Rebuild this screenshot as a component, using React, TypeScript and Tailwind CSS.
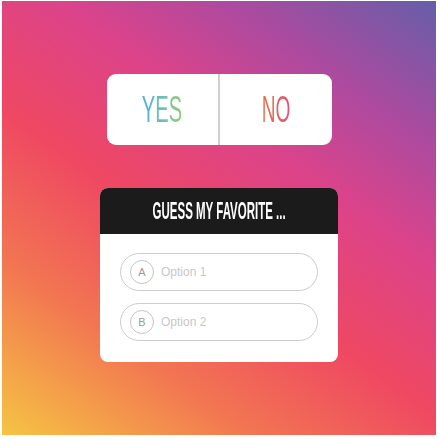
// App.tsx
const options = [
  { key: 'A', label: 'Option 1' },
  { key: 'B', label: 'Option 2' },
];

const App: React.FC = () => {
  return (
    <div className="w-[440px] h-[439px] bg-white pl-[2px] pt-[1px]">
      <div className="w-[434px] h-[434px] flex flex-col items-center pt-[73px] bg-[linear-gradient(35deg,#f6c443_0%,#f27552_24%,#ef4862_44%,#dc438a_64%,#ad4a9f_80%,#665ea9_100%)]">
        {/* poll sticker */}
        <div className="w-[225px] h-[71px] bg-white rounded-[9px] flex">
          <div className="flex-1 flex items-center justify-center border-r-[2px] border-[#cfcfcf]">
            <span
              className="inline-block scale-x-[0.56] text-[36px] leading-none bg-[linear-gradient(90deg,#4aaee0,#6fc0b4,#95cb72)] bg-clip-text text-transparent"
              style={{ fontFamily: '"Liberation Sans", Arial, sans-serif' }}
            >
              YES
            </span>
          </div>
          <div className="flex-1 flex items-center justify-center">
            <span
              className="inline-block scale-x-[0.53] text-[36px] leading-none bg-[linear-gradient(90deg,#ec7448,#d65779)] bg-clip-text text-transparent"
              style={{ fontFamily: '"Liberation Sans", Arial, sans-serif' }}
            >
              NO
            </span>
          </div>
        </div>

        {/* quiz sticker */}
        <div className="mt-[43px] w-[238px] h-[174px] bg-white rounded-[8px] overflow-hidden flex flex-col">
          <div className="h-[46px] bg-[#1b1b1b] flex items-center justify-center">
            <span
              className="inline-block whitespace-nowrap scale-x-[0.5] font-bold text-white text-[23px] leading-none"
              style={{ fontFamily: '"Liberation Sans", Arial, sans-serif' }}
            >
              GUESS MY FAVORITE ...
            </span>
          </div>
          <div className="flex flex-col gap-[12px] px-[20px] pt-[19px]">
            {options.map((o) => (
              <div
                key={o.key}
                className="h-[38px] rounded-full border-[1.5px] border-[#cdcdcd] flex items-center pl-[9px] gap-[7px]"
                style={{ fontFamily: '"Liberation Sans", Arial, sans-serif' }}
              >
                <div className="w-[24px] h-[24px] rounded-full border-[1.5px] border-[#c4c4c4] flex items-center justify-center text-[11px] text-[#9a9a9a]">
                  {o.key}
                </div>
                <span className="text-[12px] text-[#c8c8c8]">{o.label}</span>
              </div>
            ))}
          </div>
        </div>
      </div>
    </div>
  );
};

export default App;
